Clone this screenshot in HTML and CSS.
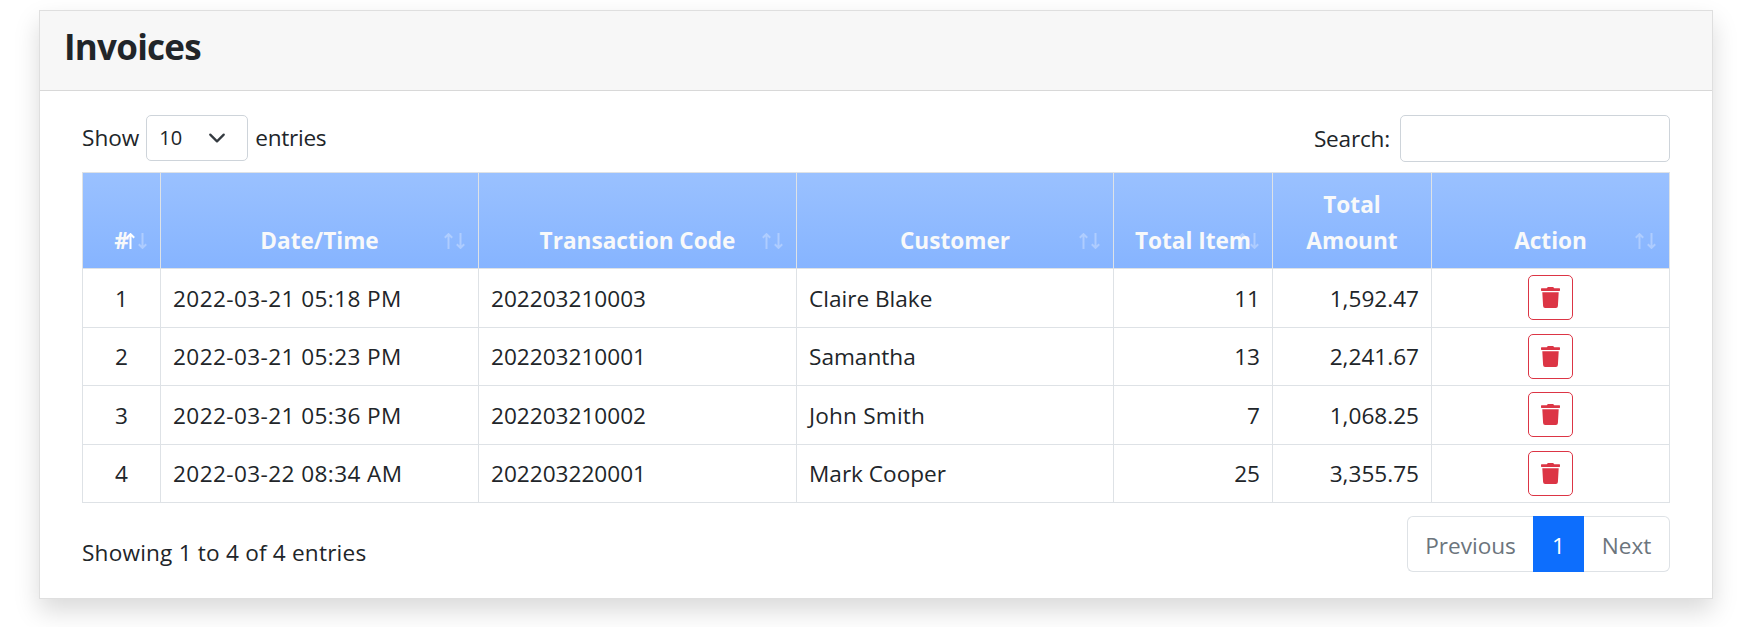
FILE: index.html
```html
<!DOCTYPE html>
<html lang="en">
<head>
<meta charset="utf-8">
<title>Invoices</title>
<link rel="stylesheet" href="styles.css">
</head>
<body>
<svg class="defs" width="0" height="0" aria-hidden="true">
  <symbol id="up" viewBox="0 0 9 16"><path d="M4.500 16V1.200M.8 4.800 4.500 1.100l3.700 3.700" fill="none" stroke="currentColor" stroke-width="2"/></symbol>
  <symbol id="down" viewBox="0 0 9 16"><path d="M4.500 0v14.800M.8 11.200l3.700 3.700 3.700-3.700" fill="none" stroke="currentColor" stroke-width="2"/></symbol>
  <symbol id="trash" viewBox="0 0 19 21"><path fill="currentColor" d="M.6 1.200h5.200L6.300.5q.3-.5.9-.5h4.600q.6 0 .9.500l.5.700h5.200q.6 0 .6.600v1.400q0 .7-.6.700H.6Q0 3.900 0 3.200V1.800q0-.6.600-.6zM1.300 5.200h16.400L16.900 19q-.1 2-2 2H4.100q-1.900 0-2-2z"/></symbol>
</svg>
<main class="card">
  <header class="card-header"><h1 class="title">Invoices</h1></header>
  <div class="card-body">
    <div class="toolbar">
      <label class="length"><span>Show</span>
        <span class="select"><span>10</span><svg class="chevron" viewBox="0 0 16 16"><path fill="none" stroke="#343a40" stroke-width="2" stroke-linecap="round" stroke-linejoin="round" d="m2 5 6 6 6-6"/></svg></span>
        <span class="entries">entries</span></label>
      <label class="search"><span class="search-label">Search:</span><input class="search-input" type="text"></label>
    </div>
    <table class="table">
      <colgroup><col class="c-num"><col class="c-date"><col class="c-code"><col class="c-cust"><col class="c-item"><col class="c-amt"><col class="c-act"></colgroup>
      <thead>
        <tr>
          <th>#<span class="sort asc"><svg><use href="#up"/></svg><svg><use href="#down"/></svg></span></th>
          <th>Date/Time<span class="sort"><svg><use href="#up"/></svg><svg><use href="#down"/></svg></span></th>
          <th>Transaction Code<span class="sort"><svg><use href="#up"/></svg><svg><use href="#down"/></svg></span></th>
          <th>Customer<span class="sort"><svg><use href="#up"/></svg><svg><use href="#down"/></svg></span></th>
          <th class="nowrap">Total Item<span class="sort"><svg><use href="#up"/></svg><svg><use href="#down"/></svg></span></th>
          <th>Total<br>Amount</th>
          <th>Action<span class="sort"><svg><use href="#up"/></svg><svg><use href="#down"/></svg></span></th>
        </tr>
      </thead>
      <tbody>
        <tr><td class="center">1</td><td class="date">2022-03-21 05:18 PM</td><td>202203210003</td><td>Claire Blake</td><td class="right">11</td><td class="right">1,592.47</td><td class="action"><button class="delete" aria-label="Delete"><svg><use href="#trash"/></svg></button></td></tr>
        <tr><td class="center">2</td><td class="date">2022-03-21 05:23 PM</td><td>202203210001</td><td>Samantha</td><td class="right">13</td><td class="right">2,241.67</td><td class="action"><button class="delete" aria-label="Delete"><svg><use href="#trash"/></svg></button></td></tr>
        <tr><td class="center">3</td><td class="date">2022-03-21 05:36 PM</td><td>202203210002</td><td class="john">John Smith</td><td class="right">7</td><td class="right">1,068.25</td><td class="action"><button class="delete" aria-label="Delete"><svg><use href="#trash"/></svg></button></td></tr>
        <tr><td class="center">4</td><td class="date">2022-03-22 08:34 AM</td><td>202203220001</td><td>Mark Cooper</td><td class="right">25</td><td class="right">3,355.75</td><td class="action"><button class="delete" aria-label="Delete"><svg><use href="#trash"/></svg></button></td></tr>
      </tbody>
    </table>
    <footer class="footer">
      <div class="info">Showing 1 to 4 of 4 entries</div>
      <nav class="pagination"><span class="page prev">Previous</span><span class="page active">1</span><span class="page next">Next</span></nav>
    </footer>
  </div>
</main>
</body>
</html>
```
FILE: styles.css
```css
* { box-sizing: border-box; }
body {
  margin: 0;
  min-height: 627px;
  padding: 10px 28px 0 39px;
  background: #fff;
  color: #212529;
  font: 22.6px/36px "Open Sans", "Noto Sans", sans-serif;
}
.defs { position: absolute; }
.card {
  height: 589px;
  border: 1px solid #dfdfdf;
  background: #fff;
  box-shadow: 0 12px 24px rgba(0, 0, 0, .15);
}
.card-header {
  height: 80px;
  padding: 12px 24px;
  background: #f7f7f7;
  border-bottom: 1px solid #d8d8d8;
}
.title { margin: 0; font-size: 35px; line-height: 48px; font-weight: 700; letter-spacing: -.75px; }
.card-body { padding: 24px 42px; }
.toolbar { display: flex; justify-content: space-between; height: 47px; }
.length, .search { display: flex; align-items: center; }
.length { height: 46px; }
.select {
  display: flex;
  align-items: center;
  justify-content: space-between;
  width: 102px;
  height: 46px;
  margin: 0 7px;
  padding: 0 21px 0 12px;
  border: 1px solid #ced4da;
  border-radius: 5px;
  font-size: 20px;
}
.entries { letter-spacing: -.3px; }
.chevron { width: 18px; height: 18px; }
.search-label { letter-spacing: -.2px; }
.search-input {
  width: 270px;
  height: 47px;
  margin: 0 0 0 10px;
  border: 1px solid #ced4da;
  border-radius: 5px;
  font: inherit;
}
.table {
  width: 1588px;
  margin-top: 10px;
  border-collapse: collapse;
  table-layout: fixed;
}
.c-num { width: 78px; }
.c-date, .c-code { width: 318px; }
.c-cust { width: 317px; }
.c-item, .c-amt { width: 159px; }
.c-act { width: 238px; }
.table th, .table td { border: 1px solid #dee2e6; }
.table thead { background: linear-gradient(#9ac1ff, #86b4ff); }
.table th {
  position: relative;
  height: 96px;
  padding: 12px 0 9px;
  color: #f8f9fa;
  font-weight: 700;
  line-height: 36px;
  vertical-align: bottom;
}
.nowrap { white-space: nowrap; }
.sort {
  position: absolute;
  right: 13px;
  bottom: 19px;
  display: flex;
  gap: 3px;
  color: #fff;
}
.sort svg { width: 9px; height: 16px; opacity: .3; }
.asc svg:first-child { opacity: 1; }
.table td { height: 58.5px; padding: 2px 12px 0; }
.table .date { letter-spacing: .4px; }
.table .john { letter-spacing: .2px; }
.center { text-align: center; }
.right { text-align: right; }
.table .action { padding: 0; text-align: center; }
.delete {
  display: inline-flex;
  align-items: center;
  justify-content: center;
  width: 45px;
  height: 45px;
  padding: 0;
  vertical-align: middle;
  border: 1px solid #dc3545;
  border-radius: 5px;
  background: #fff;
  color: #dc3545;
}
.delete svg { width: 19px; height: 21px; }
.footer { display: flex; justify-content: space-between; margin-top: 13px; }
.info { padding-top: 19px; letter-spacing: .2px; }
.pagination { display: flex; height: 56px; }
.page {
  padding: 11px 0 9px;
  border: 1px solid #dee2e6;
  color: #6c757d;
  line-height: 36px;
  text-align: center;
}
.prev { width: 126px; border-right: 0; border-radius: 6px 0 0 6px; }
.active { width: 51px; background: #0d6efd; border-color: #0d6efd; color: #fff; }
.next { width: 86px; border-left: 0; border-radius: 0 6px 6px 0; }
```
